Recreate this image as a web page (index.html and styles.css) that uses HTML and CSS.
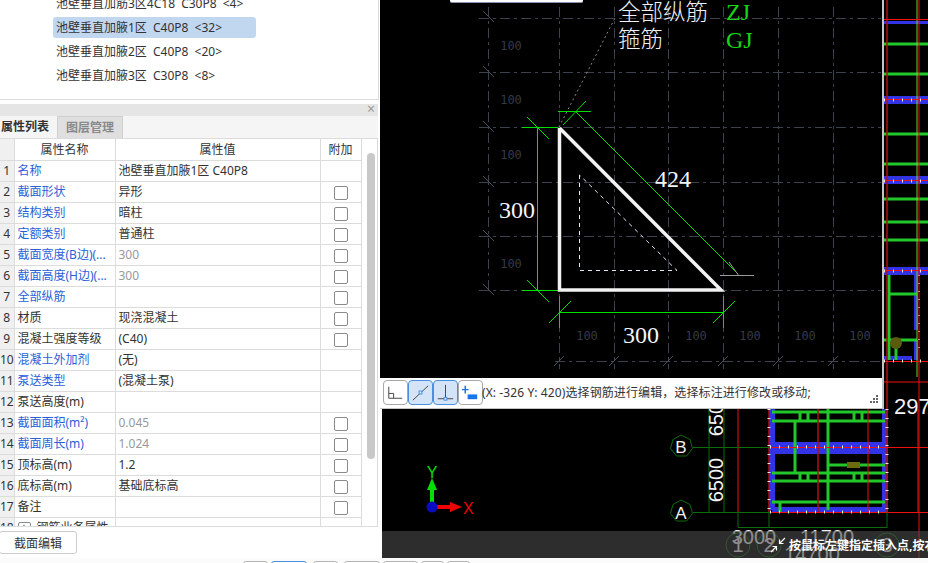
FILE: index.html
```html
<!DOCTYPE html>
<html lang="zh">
<head>
<meta charset="utf-8">
<title>截面编辑</title>
<link rel="stylesheet" href="styles.css">
</head>
<body>
<div class="page">
  <main class="main">
    <aside class="side">
      <ul class="tree">
        <li class="tree-item tree-clip"><span class="tree-label">池壁垂直加筋3区4C18 C30P8 &lt;4&gt;</span></li>
        <li class="tree-item"><span class="tree-label selected">池壁垂直加腋1区 C40P8 &lt;32&gt;</span></li>
        <li class="tree-item"><span class="tree-label">池壁垂直加腋2区 C40P8 &lt;20&gt;</span></li>
        <li class="tree-item"><span class="tree-label">池壁垂直加腋3区 C30P8 &lt;8&gt;</span></li>
      </ul>
      <div class="props">
        <div class="titlebar"><span class="close">×</span></div>
        <div class="tabs">
          <span class="tab active">属性列表</span>
          <span class="tab">图层管理</span>
        </div>
        <div class="table-wrap">
          <table class="grid">
            <colgroup><col class="c0"><col class="c1"><col class="c2"><col class="c3"></colgroup>
            <thead><tr><th class="num"></th><th>属性名称</th><th>属性值</th><th>附加</th></tr></thead>
            <tbody>
              <tr><td class="num">1</td><td class="link">名称</td><td>池壁垂直加腋1区 C40P8</td><td></td></tr>
              <tr><td class="num">2</td><td class="link">截面形状</td><td>异形</td><td><i class="cb"></i></td></tr>
              <tr><td class="num">3</td><td class="link">结构类别</td><td>暗柱</td><td><i class="cb"></i></td></tr>
              <tr><td class="num">4</td><td class="link">定额类别</td><td>普通柱</td><td><i class="cb"></i></td></tr>
              <tr><td class="num">5</td><td class="link">截面宽度(B边)(...</td><td class="mute">300</td><td><i class="cb"></i></td></tr>
              <tr><td class="num">6</td><td class="link">截面高度(H边)(...</td><td class="mute">300</td><td><i class="cb"></i></td></tr>
              <tr><td class="num">7</td><td class="link">全部纵筋</td><td></td><td><i class="cb"></i></td></tr>
              <tr><td class="num">8</td><td>材质</td><td>现浇混凝土</td><td><i class="cb"></i></td></tr>
              <tr><td class="num">9</td><td>混凝土强度等级</td><td>(C40)</td><td><i class="cb"></i></td></tr>
              <tr><td class="num">10</td><td class="link">混凝土外加剂</td><td>(无)</td><td></td></tr>
              <tr><td class="num">11</td><td class="link">泵送类型</td><td>(混凝土泵)</td><td></td></tr>
              <tr><td class="num">12</td><td>泵送高度(m)</td><td></td><td></td></tr>
              <tr><td class="num">13</td><td class="link">截面面积(m²)</td><td class="mute">0.045</td><td><i class="cb"></i></td></tr>
              <tr><td class="num">14</td><td class="link">截面周长(m)</td><td class="mute">1.024</td><td><i class="cb"></i></td></tr>
              <tr><td class="num">15</td><td>顶标高(m)</td><td>1.2</td><td><i class="cb"></i></td></tr>
              <tr><td class="num">16</td><td>底标高(m)</td><td>基础底标高</td><td><i class="cb"></i></td></tr>
              <tr><td class="num">17</td><td>备注</td><td></td><td><i class="cb"></i></td></tr>
              <tr><td class="num">18</td><td><i class="plus">+</i> 钢筋业务属性</td><td></td><td></td></tr>
            </tbody>
          </table>
          <div class="scroll"><span class="thumb"></span></div>
        </div>
        <div class="foot"><button class="btn">截面编辑</button></div>
      </div>
    </aside>

    <section class="stage">
      <svg class="plan" viewBox="380 0 548 558" width="548" height="558">
        <g stroke="#3333e6" stroke-width="3" fill="none">
          <path d="M884 22.500H928"/>
          <path d="M884 100H928M884 180H928M884 271H928" stroke-width="8"/>
          <path d="M916 275V330M916 340V360M884 358H912" stroke-width="4"/>
          <path d="M772 409V445H885V409M772 510V451H885V510H772" stroke-width="6"/>
        </g>
        <g stroke="#22c72a" stroke-width="3" fill="none">
          <path d="M884 44H928M884 74H928M884 134H928M884 164H928M884 199H928M884 222H928M884 240H928"/>
          <path d="M889 275V360M889 294H917M884 340H917M896 340V360"/>
          <path d="M772 412H885M772 421H885M772 473H885M772 481H885M772 502H885M828 409V510M795 421V473M828 465H885M800 412V421M808 412V421M854 412V421M862 412V421M800 473V481M808 473V481M854 473V481M862 473V481M780 502V512"/>
        </g>
        <path d="M917 0V377" stroke="#5fdc3c" stroke-width="1"/>
        <rect x="847" y="462" width="13" height="6" fill="#6b6b10"/>
        <circle cx="896" cy="343" r="6" fill="#5a5a10"/>
        <g stroke="#b01010" stroke-width="1.500" fill="none">
          <path d="M887 0V409M769 409V513M818 409V513M887 409V513"/>
        </g>
        <g stroke="#f01010" stroke-width="1" fill="none">
          <path d="M919 0V558M868 409V513M918 409V513M738 409V513"/>
          <path d="M884 19.500H928M884 99.500H928M884 180.500H928M884 270.500H928M884 361.500H928M884 382H928"/>
          <path d="M693 447.500H928M693 512.500H928"/>
        </g>
        <g stroke="#e8e8e8" stroke-width="3" stroke-dasharray="1 8" fill="none">
          <path d="M884 100H928M884 181H928M884 271H928M884 361H928"/>
          <path d="M770 447H887M770 512H887M769 409V512M887 409V512"/>
        </g>
        <path d="M919 275V350" stroke="#fff" stroke-width="1" stroke-dasharray="1 7"/>
        <g stroke="#0d6a0d" stroke-width="1" fill="none">
          <path d="M693 447.500H770M693 512.500H770M709 409V512M724 409V512M738 512V527M738 527.500H887M769 512V528M887 512V528"/>
          <path d="M681 435l9 4.500 2.500 9-6 7.500h-10l-6-7.500 2.500-9z"/>
          <path d="M681 500l9 4.500 2.500 9-6 7.500h-10l-6-7.500 2.500-9z"/>
          <circle cx="738" cy="545" r="12"/>
          <circle cx="769" cy="545" r="12"/>
          <circle cx="887" cy="545" r="12"/>
        </g>
        <text class="cad-w" x="681" y="453" text-anchor="middle" font-size="17">B</text>
        <text class="cad-w" x="681" y="519" text-anchor="middle" font-size="17">A</text>
        <text class="cad-w" x="723" y="480" text-anchor="middle" font-size="20" transform="rotate(-90 723 480)">6500</text>
        <text class="cad-w" x="723" y="414" text-anchor="middle" font-size="20" transform="rotate(-90 723 414)">6500</text>
        <text class="cad-w" x="894" y="414" font-size="22">2970</text>
        <text class="cad-w" x="754" y="544" text-anchor="middle" font-size="20">3000</text>
        <text class="cad-w" x="827" y="544" text-anchor="middle" font-size="20">11700</text>
        <text class="cad-w" x="812" y="561" text-anchor="middle" font-size="20">14700</text>
        <text class="cad-w" x="738" y="552" text-anchor="middle" font-size="20">1</text>
        <text class="cad-w" x="769" y="552" text-anchor="middle" font-size="20">2</text>
        <text class="cad-w" x="887" y="552" text-anchor="middle" font-size="20">3</text>
        <path d="M432 507V488" stroke="#00e000" stroke-width="4"/>
        <path d="M432 478l5 12h-10z" fill="#00e000"/>
        <path d="M432 507H452" stroke="#f00000" stroke-width="4"/>
        <path d="M462 507l-12 5v-10z" fill="#f00000"/>
        <circle cx="432" cy="507" r="5.500" fill="#0a0ac0"/>
        <text class="axis-y" x="432" y="478" text-anchor="middle">Y</text>
        <text class="axis-x" x="463" y="514">X</text>
      </svg>

      <div class="dialog">
        <svg class="drawing" viewBox="380 0 502 378" width="502" height="378">
          <g stroke="#3c4250" stroke-width="1" stroke-dasharray="10 4 3 4" fill="none">
            <path d="M479 18.500H881M479 72.500H881M479 127.500H881M479 182.500H881M479 236.500H881M479 290.500H881"/>
            <path d="M559.500 7V369M614.500 7V369M668.500 7V369M723.500 7V369M778.500 7V369M833.500 7V369M488.500 7V291"/>
            <path d="M555 361.500H881"/>
          </g>
          <g stroke="#4a5060" stroke-width="1" fill="none">
            <path d="M483 11l11 11M483 66l11 11M483 121l11 11M483 176l11 11M483 230l11 11M483 284l11 11"/>
            <path d="M554 366l10-10M609 366l10-10M663 366l10-10M718 366l10-10M773 366l10-10M828 366l10-10"/>
          </g>
          <text class="tick-label" x="511" y="50">100</text>
          <text class="tick-label" x="511" y="104">100</text>
          <text class="tick-label" x="511" y="159">100</text>
          <text class="tick-label" x="511" y="268">100</text>
          <text class="tick-label" x="587" y="340">100</text>
          <text class="tick-label" x="696" y="340">100</text>
          <text class="tick-label" x="750" y="340">100</text>
          <text class="tick-label" x="805" y="340">100</text>
          <text class="tick-label" x="860" y="340">100</text>
          <path d="M559 127L615 18" stroke="#8a8a8a" stroke-width="1" stroke-dasharray="2 3" fill="none"/>
          <g stroke="#00e000" stroke-width="1" fill="none">
            <path d="M537.500 127V290M522 127.500H558M522 290.500H558M527 117l22 22M527 280l22 22"/>
            <path d="M559 312.500H723M559.500 296V328M723.500 296V328M549 323l22-22M713 323l22-22"/>
            <path d="M576 112L738 274M558 111.500H591M586 101l-23 24"/>
          </g>
          <path d="M720 275.500H754M729 262l10 14" stroke="#9a9a9a" stroke-width="1" fill="none"/>
          <path d="M579.500 175V270.500H677L579.500 175" stroke="#dfe6f5" stroke-width="1" stroke-dasharray="4 4" fill="none"/>
          <path d="M559.500 128V290H721L559.500 128" stroke="#f2f2f2" stroke-width="3.500" fill="none"/>
          <text class="cad-label" x="618" y="20">全部纵筋</text>
          <text class="cad-label" x="618" y="47">箍筋</text>
          <text class="cad-code" x="726" y="20">ZJ</text>
          <text class="cad-code" x="726" y="48">GJ</text>
          <text class="cad-dim" x="655" y="187">424</text>
          <text class="cad-dim" x="499" y="218">300</text>
          <text class="cad-dim" x="623" y="343">300</text>
        </svg>
        <div class="statusbar">
          <span class="tool">
            <svg viewBox="0 0 24 24" width="23" height="23"><path d="M5 6V18H19M5 13H10V18" fill="none" stroke="#444" stroke-width="1"/></svg>
          </span>
          <span class="tool on">
            <svg viewBox="0 0 24 24" width="23" height="23"><path d="M4 20L20 5" stroke="#444" stroke-width="1"/><rect x="10.500" y="10.500" width="3" height="3" fill="#d3e3f8" stroke="#4a90e2"/></svg>
          </span>
          <span class="tool on">
            <svg viewBox="0 0 24 24" width="23" height="23"><path d="M12 4V18M4 18.500H20" stroke="#444" stroke-width="1"/><rect x="10.500" y="17" width="3" height="3" fill="#d3e3f8" stroke="#4a90e2"/></svg>
          </span>
          <span class="tool">
            <svg viewBox="0 0 24 24" width="23" height="23"><path d="M3 9H10M6.500 5V13" stroke="#1a73e8" stroke-width="1.500"/><rect x="9" y="14" width="10" height="5" fill="#1a73e8"/></svg>
          </span>
          <span class="status-text">(X: -326 Y: 420)选择钢筋进行编辑，选择标注进行修改或移动;</span>
          <svg class="grip" viewBox="0 0 8 8" width="8" height="8"><path d="M6 0h2v2h-2zM3 3h2v2h-2zM6 3h2v2h-2zM0 6h2v2h-2zM3 6h2v2h-2zM6 6h2v2h-2z" fill="#666"/></svg>
        </div>
      </div>

      <span class="topbar"></span>

      <div class="hint">
        <svg class="hint-icon" viewBox="0 0 16 16" width="16" height="16"><path d="M15 1L9.500 6.500M9.500 2.500V6.500H13.500M1 15L6.500 9.500M6.500 13.500V9.500H2.500" fill="none" stroke="#fff" stroke-width="1.200"/></svg>
        <span class="hint-text">按鼠标左键指定插入点,按右键取消</span>
      </div>
    </section>
  </main>
  <footer class="taskbar">
    <span class="tb b1"></span><span class="tb b2 on"></span><span class="tb b3"></span><span class="tb b4"></span><span class="tb b5"></span><span class="tb b6"></span><span class="tb b7"></span>
  </footer>
</div>
</body>
</html>
```
FILE: styles.css
```css
* { box-sizing: border-box; }
html, body { margin: 0; padding: 0; }
body {
  width: 928px;
  height: 563px;
  overflow: hidden;
  background: #fff;
  font-family: "Noto Sans", "Noto Sans CJK SC", sans-serif;
  font-size: 12px;
  color: #333;
}
.page { display: flex; flex-direction: column; height: 563px; }
.main { display: flex; height: 558px; }

/* left side */
.side { width: 380px; flex: none; display: flex; flex-direction: column; background: #fff; }
.tree {
  list-style: none;
  margin: 0;
  padding: 0;
  width: 379px;
  height: 100px;
  border-right: 1px solid #dcdcdc;
  border-bottom: 1px solid #dcdcdc;
  overflow: hidden;
}
.tree-item { height: 24px; padding-left: 53px; display: flex; align-items: center; }
.tree-clip { margin-top: -9px; }
.tree-label { display: block; padding: 0 3px; line-height: 21px; height: 21px; white-space: nowrap; word-spacing: 3px; }
.selected { width: 203px; background: #c1d7f0; border-radius: 3px; }

.props { flex: 1; display: flex; flex-direction: column; margin-top: 4px; width: 378px; }
.titlebar { height: 12px; background: #e5e5e5; position: relative; flex: none; }
.close { position: absolute; right: 3px; top: -3px; font-size: 14px; line-height: 16px; color: #999; }
.tabs { height: 23px; display: flex; align-items: stretch; background: #f5f5f5; border-bottom: 1px solid #dcdcdc; flex: none; }
.tab {
  width: 57px;
  padding: 0 0 0 1px;
  font-weight: 700;
  line-height: 22px;
  color: #333;
}
.tab + .tab {
  width: 66px;
  margin-left: 0;
  padding: 0;
  text-align: center;
  background: #dfdfdf;
  border: 1px solid #cfcfcf;
  border-bottom: 0;
  color: #8a8a8a;
}

.table-wrap {
  height: 388px;
  display: flex;
  overflow: hidden;
  border-right: 1px solid #dcdcdc;
  border-bottom: 1px solid #dcdcdc;
  flex: none;
}
.grid { width: 361px; table-layout: fixed; border-collapse: collapse; flex: none; align-self: flex-start; }
.c0 { width: 14px; }
.c1 { width: 101px; }
.c2 { width: 205px; }
.c3 { width: 41px; }
.grid th, .grid td {
  height: 21px;
  padding: 0 3px;
  border: 1px solid #dcdcdc;
  border-top: 0;
  font-weight: 400;
  line-height: 17px;
  white-space: nowrap;
  overflow: hidden;
}
.grid th { text-align: center; }
.grid td:last-child, .grid th:last-child { text-align: center; padding: 0; }
.grid .num {
  padding: 0;
  text-align: center;
  background: #f0f0f0;
  border-left: 0;
  color: #333;
}
.link { color: #2a5fd8; }
.mute { color: #999; }
.cb {
  display: inline-block;
  width: 14px;
  height: 14px;
  border: 1px solid #8a8a8a;
  border-radius: 2px;
  background: #fff;
  vertical-align: middle;
}
.plus {
  display: inline-block;
  width: 13px;
  height: 13px;
  margin-right: 3px;
  border: 1px solid #888;
  border-radius: 2px;
  font-style: normal;
  line-height: 10px;
  text-align: center;
}
.scroll { flex: 1; position: relative; }
.thumb {
  position: absolute;
  left: 5px;
  top: 14px;
  width: 8px;
  height: 306px;
  border-radius: 4px;
  background: #c8c8c8;
}
.foot { flex: 1; padding-top: 4px; }
.btn {
  width: 78px;
  height: 23px;
  margin: 0 0 0 -1px;
  padding: 0;
  background: #fff;
  border: 1px solid #ccc;
  border-radius: 3px;
  font: inherit;
  color: #333;
}

/* canvas */
.stage { position: relative; flex: 1; background: #000; overflow: hidden; }
.stage::before {
  content: "";
  position: absolute;
  left: 0;
  top: 378px;
  width: 2px;
  height: 180px;
  background: #fff;
}
.plan { position: absolute; left: 0; top: 0; display: block; }
.cad-w { fill: #f2f2f2; font-family: "Liberation Sans", sans-serif; }
.axis-y { fill: #00e000; font: 16px "Liberation Sans", sans-serif; }
.axis-x { fill: #f00000; font: 16px "Liberation Sans", sans-serif; }

.dialog {
  position: absolute;
  left: 0;
  top: 0;
  width: 504px;
  height: 409px;
  display: flex;
  flex-direction: column;
  background: #000;
  border-right: 2px solid #c4c4c4;
  border-bottom: 1px solid #c4c4c4;
}
.drawing { display: block; flex: none; }
.tick-label { fill: #343a48; font: 12px "DejaVu Sans Mono", monospace; text-anchor: middle; }
.cad-label { fill: #eef2f8; font: 22.500px "Noto Sans CJK SC", serif; font-weight: 300; }
.cad-code { fill: #14d814; font: 24px "Liberation Serif", serif; }
.cad-dim { fill: #f2f5fb; font: 24px "Liberation Serif", serif; }

.statusbar {
  flex: 1;
  display: flex;
  align-items: center;
  padding: 0 4px 2px 3px;
  background: #fff;
  position: relative;
}
.tool {
  width: 25px;
  height: 25px;
  display: flex;
  align-items: center;
  justify-content: center;
  border: 1px solid #a8a8a8;
  border-radius: 4px;
  background: #fff;
  flex: none;
}
.tool.on { background: #d3e3f8; border-color: #4a90e2; }
.status-text { margin-left: -1px; white-space: nowrap; color: #333; letter-spacing: .1px; }
.grip { position: absolute; right: 4px; bottom: 5px; }

.topbar {
  position: absolute;
  left: 70px;
  top: 0;
  width: 133px;
  height: 3px;
  background: #fff;
  border-bottom: 1px solid #8a90a8;
  border-radius: 0 0 2px 2px;
}

.hint {
  position: absolute;
  left: 2px;
  right: 0;
  top: 531px;
  height: 27px;
  display: flex;
  align-items: center;
  padding-left: 389px;
  background: rgba(75, 75, 75, .6);
  color: #fff;
  white-space: nowrap;
  overflow: hidden;
}
.hint-icon { margin-right: 3px; flex: none; margin-left: -1px; }
.hint-text { font-size: 12px; font-weight: 700; }

/* bottom strip */
.taskbar { position: relative; height: 5px; background: #fbfbfb; overflow: hidden; }
.tb {
  position: absolute;
  top: 3px;
  height: 8px;
  background: #fff;
  border: 1px solid #b4b4b4;
  border-radius: 3px;
}
.tb.on { border-color: #4a90e2; }
.b1 { left: 243px; width: 25px; }
.b2 { left: 271px; width: 36px; }
.b3 { left: 313px; width: 25px; }
.b4 { left: 344px; width: 36px; }
.b5 { left: 383px; width: 35px; }
.b6 { left: 421px; width: 23px; }
.b7 { left: 447px; width: 23px; }
```
